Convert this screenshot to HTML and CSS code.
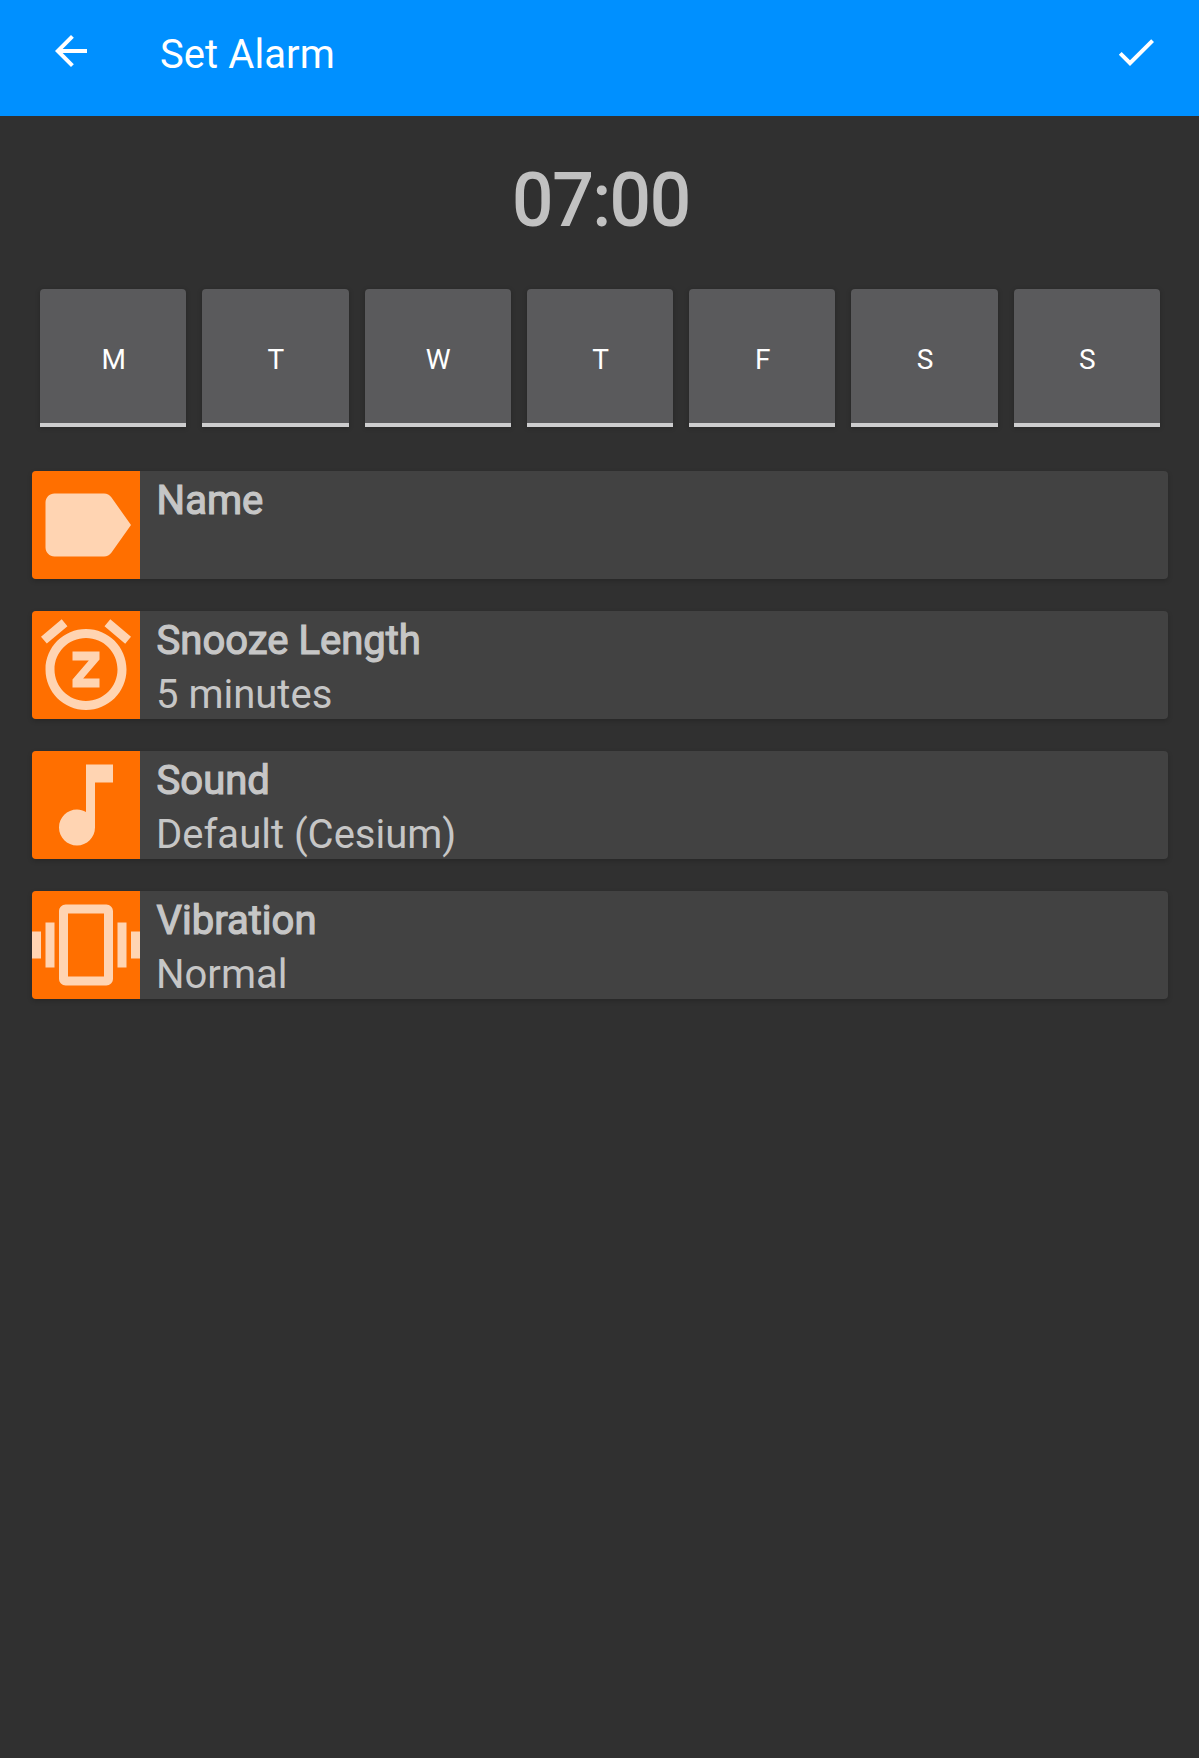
FILE: index.html
```html
<!DOCTYPE html>
<html lang="en">
<head>
<meta charset="utf-8">
<title>Set Alarm</title>
<link rel="stylesheet" href="styles.css">
</head>
<body>
<header class="bar">
  <svg class="back" viewBox="0 0 24 24"><path d="M20 11H7.83l5.59-5.59L12 4l-8 8 8 8 1.41-1.41L7.83 13H20v-2z"/></svg>
  <h1 class="title">Set Alarm</h1>
  <svg class="done" viewBox="0 0 24 24"><path d="M9 16.17L4.83 12l-1.42 1.41L9 19 21 7l-1.41-1.41z"/></svg>
</header>
<main>
  <div class="time">07:00</div>
  <div class="days">
    <button class="day">M</button>
    <button class="day">T</button>
    <button class="day">W</button>
    <button class="day">T</button>
    <button class="day">F</button>
    <button class="day">S</button>
    <button class="day">S</button>
  </div>
  <div class="cards">
    <section class="card">
      <svg class="icon" viewBox="0 0 24 24"><path d="M17.63 5.84C17.27 5.33 16.67 5 16 5L5 5.01C3.9 5.01 3 5.9 3 7v10c0 1.1.9 1.99 2 1.99L16 19c.67 0 1.27-.33 1.63-.84L22 12l-4.37-6.16z"/></svg>
      <div class="text"><div class="label">Name</div></div>
    </section>
    <section class="card">
      <svg class="icon" viewBox="0 0 24 24"><path d="M7.88 3.39L6.6 1.86 2 5.71l1.29 1.53 4.59-3.85zM22 5.72l-4.6-3.86-1.29 1.53 4.6 3.86L22 5.72zM12 4c-4.97 0-9 4.03-9 9s4.02 9 9 9c4.97 0 9-4.03 9-9s-4.03-9-9-9zm0 16c-3.87 0-7-3.13-7-7s3.13-7 7-7 7 3.13 7 7-3.13 7-7 7zm-3-9h3.63L9 15.2V17h6v-2h-3.63L15 10.8V9H9v2z"/></svg>
      <div class="text"><div class="label">Snooze Length</div><div class="value">5 minutes</div></div>
    </section>
    <section class="card">
      <svg class="icon" viewBox="0 0 24 24"><path d="M12 3v10.55c-.59-.34-1.27-.55-2-.55-2.21 0-4 1.79-4 4s1.79 4 4 4 4-1.79 4-4V7h4V3h-6z"/></svg>
      <div class="text"><div class="label">Sound</div><div class="value">Default (Cesium)</div></div>
    </section>
    <section class="card">
      <svg class="icon" viewBox="0 0 24 24"><path d="M0 15h2V9H0v6zm3 2h2V7H3v10zm19-8v6h2V9h-2zm-3 8h2V7h-2v10zM16.5 3h-9C6.67 3 6 3.67 6 4.5v15c0 .83.67 1.5 1.5 1.5h9c.83 0 1.5-.67 1.5-1.5v-15c0-.83-.67-1.5-1.5-1.5zM16 19H8V5h8v14z"/></svg>
      <div class="text"><div class="label">Vibration</div><div class="value">Normal</div></div>
    </section>
  </div>
</main>
</body>
</html>
```
FILE: styles.css
```css
* { box-sizing: border-box; }

body {
  margin: 0;
  min-height: 1758px;
  background: #303030;
  color: #c1c1c1;
  font-family: Roboto, sans-serif;
}

.bar {
  display: flex;
  align-items: flex-start;
  height: 116px;
  padding: 27px 39px 0 47px;
  background: #0090ff;
  color: #fff;
}

.back,
.done {
  width: 48px;
  height: 48px;
  fill: currentColor;
}

.done { margin: 1px 0 0 auto; }

.title {
  margin: 1px 0 0 65px;
  font-size: 40px;
  font-weight: 400;
  line-height: 54px;
  letter-spacing: 0.08px;
}

.time {
  height: 173px;
  padding: 43px 0 0 4px;
  font-size: 72px;
  line-height: 84px;
  text-align: center;
  letter-spacing: -0.3px;
  -webkit-text-stroke: 1.8px #c1c1c1;
}

.days {
  display: grid;
  grid-template-columns: repeat(7, 1fr);
  gap: 16px;
  padding: 0 39px 0 40px;
}

.day {
  height: 138px;
  padding: 8px 0 0 1px;
  border: 0;
  border-bottom: 4px solid #cdcdce;
  border-radius: 4px 4px 0 0;
  background: #5a5a5c;
  box-shadow: 0 1px 5px rgba(0, 0, 0, 0.22);
  color: #fff;
  font: 400 28px/34px Roboto, sans-serif;
}

.cards {
  display: flex;
  flex-direction: column;
  gap: 32px;
  padding: 44px 31px 0 32px;
}

.card {
  display: flex;
  height: 108px;
  border-radius: 4px;
  overflow: hidden;
  background: #424242;
  box-shadow: 0 2px 5px rgba(0, 0, 0, 0.2);
  color: #c6c6c6;
  font-size: 40px;
  line-height: 54px;
}

.icon {
  width: 108px;
  height: 108px;
  background: #ff6f00;
  fill: #ffd4b2;
}

.text { padding: 3px 16px 0; }

.label {
  padding-left: 0.6px;
  -webkit-text-stroke: 1.2px #c6c6c6;
}
```
